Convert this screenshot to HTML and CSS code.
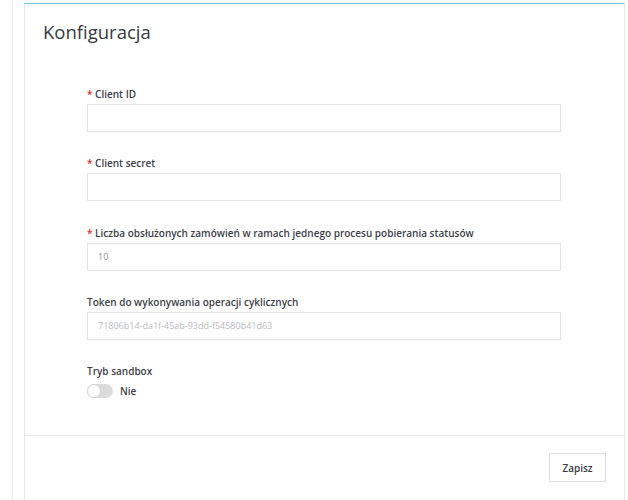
FILE: index.html
```html
<!DOCTYPE html>
<html lang="pl">
<head>
<meta charset="utf-8">
<title>Konfiguracja</title>
<link rel="stylesheet" href="styles.css">
</head>
<body>
<div class="frame">
  <div class="card">
    <div class="card-header">
      <h3 class="card-title">Konfiguracja</h3>
    </div>
    <div class="card-body">
      <div class="form-group">
        <label class="form-label"><span class="req">*</span> Client ID</label>
        <input class="form-input" type="text" value="">
      </div>
      <div class="form-group">
        <label class="form-label"><span class="req">*</span> Client secret</label>
        <input class="form-input" type="text" value="">
      </div>
      <div class="form-group">
        <label class="form-label"><span class="req">*</span> Liczba obsłużonych zamówień w ramach jednego procesu pobierania statusów</label>
        <input class="form-input" type="text" value="10">
      </div>
      <div class="form-group">
        <label class="form-label">Token do wykonywania operacji cyklicznych</label>
        <input class="form-input is-muted" type="text" value="71806b14-da1f-45ab-93dd-f54580b41d63" readonly>
      </div>
      <div class="form-group last">
        <label class="form-label">Tryb sandbox</label>
        <div class="switch-row">
          <span class="switch"><span class="knob"></span></span>
          <span class="switch-text">Nie</span>
        </div>
      </div>
    </div>
    <div class="card-footer">
      <button class="btn" type="button">Zapisz</button>
    </div>
  </div>
</div>
</body>
</html>
```
FILE: styles.css
```css
html, body {
  margin: 0;
  padding: 0;
  background: #ffffff;
  font-family: "Open Sans", "Noto Sans", sans-serif;
  color: #363a41;
}

.frame {
  margin-left: 12px;
  border-left: 1px solid #ececec;
  padding: 3px 3px 0 11px;
  height: 500px;
  box-sizing: border-box;
  overflow: hidden;
}

.card {
  border: 1px solid #e4e4e4;
  border-top: 1px solid #74c3cf;
  background: #fff;
  height: 520px;
}

.card-header {
  padding: 16px 18px 0 18px;
}

.card-title {
  margin: 0;
  font-size: 18.5px;
  line-height: 24px;
  font-weight: 400;
  color: #363a41;
}

.card-body {
  padding: 43px 0 37px 62px;
  border-bottom: 1px solid #e8e8e8;
}

.form-group {
  width: 474px;
  margin-bottom: 24.3px;
}

.form-group.last {
  margin-bottom: 0;
}

.form-label {
  display: block;
  font-size: 10px;
  line-height: 14px;
  font-weight: 600;
  color: #3d4147;
  margin-bottom: 3px;
  white-space: nowrap;
}

.req {
  color: #e3262f;
}

.form-input {
  display: block;
  box-sizing: border-box;
  width: 474px;
  height: 28px;
  border: 1px solid #e3e3e3;
  background: #fff;
  padding: 0 10px;
  font-family: "Open Sans", "Noto Sans", sans-serif;
  font-size: 9px;
  color: #8a8d91;
  outline: none;
}

.form-input.is-muted {
  color: #b9bbbe;
}

.switch-row {
  display: flex;
  align-items: center;
  gap: 7px;
  margin-top: 6px;
}

.switch {
  position: relative;
  display: inline-block;
  width: 26px;
  height: 14px;
  border-radius: 7px;
  background: #dcdcdc;
}

.knob {
  position: absolute;
  left: 0;
  top: 0;
  width: 14px;
  height: 14px;
  border-radius: 50%;
  background: #fff;
  box-sizing: border-box;
  border: 1px solid #d4d4d4;
}

.switch-text {
  font-size: 10px;
  font-weight: 600;
  color: #3d4147;
}

.card-footer {
  display: flex;
  justify-content: flex-end;
  padding: 17px 18px 0 0;
}

.btn {
  width: 57px;
  height: 29px;
  border: 1px solid #dedede;
  background: #fff;
  font-family: "Open Sans", "Noto Sans", sans-serif;
  font-size: 10px;
  font-weight: 600;
  color: #363a41;
  padding: 0;
}
```
